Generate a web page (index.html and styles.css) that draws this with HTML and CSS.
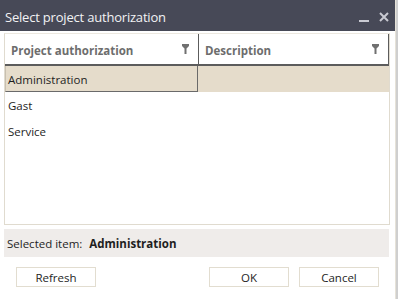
FILE: index.html
```html
<!DOCTYPE html>
<html lang="en">
<head>
  <meta charset="UTF-8">
  <title>Select project authorization</title>
  <link rel="stylesheet" href="styles.css">
</head>
<body>
  <div class="window">
    <div class="titlebar">
      <span class="title">Select project authorization</span>
      <span class="win-btns">
        <span class="min-btn"></span>
        <svg class="close-btn" width="10" height="10" viewBox="0 0 10 10">
          <path d="M1 1 L9 9 M9 1 L1 9" stroke="#c9cad2" stroke-width="2"/>
        </svg>
      </span>
    </div>

    <div class="content">
      <!-- Grid -->
      <div class="grid">
        <div class="grid-head">
          <div class="head-cell">
            <span>Project authorization</span>
            <svg class="filter" width="7" height="10" viewBox="0 0 7 10"><path d="M0 0 H7 V2 L4.5 4.5 V10 H2.5 V4.5 L0 2 Z" fill="#707070"/></svg>
          </div>
          <div class="head-cell">
            <span>Description</span>
            <svg class="filter" width="7" height="10" viewBox="0 0 7 10"><path d="M0 0 H7 V2 L4.5 4.5 V10 H2.5 V4.5 L0 2 Z" fill="#707070"/></svg>
          </div>
        </div>
        <div class="row selected">
          <div class="cell focus">Administration</div>
          <div class="cell"></div>
        </div>
        <div class="row">
          <div class="cell">Gast</div>
          <div class="cell"></div>
        </div>
        <div class="row">
          <div class="cell">Service</div>
          <div class="cell"></div>
        </div>
      </div>

      <!-- Status -->
      <div class="status">Selected item: <strong>Administration</strong></div>

      <!-- Buttons -->
      <div class="buttons">
        <button>Refresh</button>
        <span class="spacer"></span>
        <button>OK</button>
        <button>Cancel</button>
      </div>
    </div>
  </div>
</body>
</html>
```

FILE: styles.css
```css
body {
  margin: 0;
  background: #cfcfcf;
  font-family: "Open Sans", "Noto Sans", sans-serif;
  color: #1e1e1e;
}

.window {
  width: 396px;
  height: 299px;
  background: white;
  border-right: 1px solid #e6e2d8;
  box-sizing: border-box;
}

.titlebar {
  height: 31px;
  background: #474957;
  display: flex;
  align-items: center;
  justify-content: space-between;
  padding: 0 6px 0 5px;
  box-sizing: border-box;
}

.title {
  color: #f2f2f4;
  font-size: 13px;
  letter-spacing: -0.2px;
  margin-top: 2px;
}

.win-btns {
  display: flex;
  align-items: center;
  gap: 10px;
  margin-top: 2px;
}

.min-btn {
  width: 10px;
  height: 2px;
  background: #c9cad2;
  margin-top: 8px;
}

.content {
  padding: 2px 5px 0 4px;
}

.grid {
  height: 192px;
  border: 1px solid #e0dbcf;
  border-top-color: #ece8df;
  box-sizing: border-box;
}

.grid-head {
  display: grid;
  grid-template-columns: 193px 1fr;
  height: 32px;
  border-bottom: 2px solid #5c5c5c;
  border-right: 1px solid #5c5c5c;
  box-sizing: border-box;
}

.head-cell {
  display: flex;
  align-items: center;
  justify-content: space-between;
  padding: 2px 9px 0 6px;
  font-size: 11.5px;
  font-weight: bold;
  color: #6d6d6d;
}

.head-cell + .head-cell {
  border-left: 1px solid #5c5c5c;
}

.filter {
  margin-top: -3px;
}

.row {
  display: grid;
  grid-template-columns: 193px 1fr;
  height: 26px;
  font-size: 11.5px;
}

.row.selected {
  background: #e5dccb;
}

.cell {
  display: flex;
  align-items: center;
  padding-left: 3px;
}

.cell.focus {
  border: 1px solid #6a6a6a;
  border-top: none;
  border-left-color: #c8c0b0;
  padding: 1px 0 0 2px;
}

.status {
  margin-top: 4px;
  height: 28px;
  background: #efecea;
  display: flex;
  align-items: center;
  padding-left: 3px;
  font-size: 11.5px;
  white-space: pre;
  margin-right: 1px;
}

.status strong {
  margin-left: 4px;
}

.buttons {
  display: flex;
  gap: 10px;
  padding: 10px 0 0 12px;
}

.spacer {
  flex: 1;
}

button {
  width: 80px;
  height: 20px;
  background: white;
  border: 1px solid #e2ddd0;
  font-family: inherit;
  font-size: 11.5px;
  color: #1e1e1e;
  padding: 0;
}

button:last-child {
  margin-right: 11px;
}
```
